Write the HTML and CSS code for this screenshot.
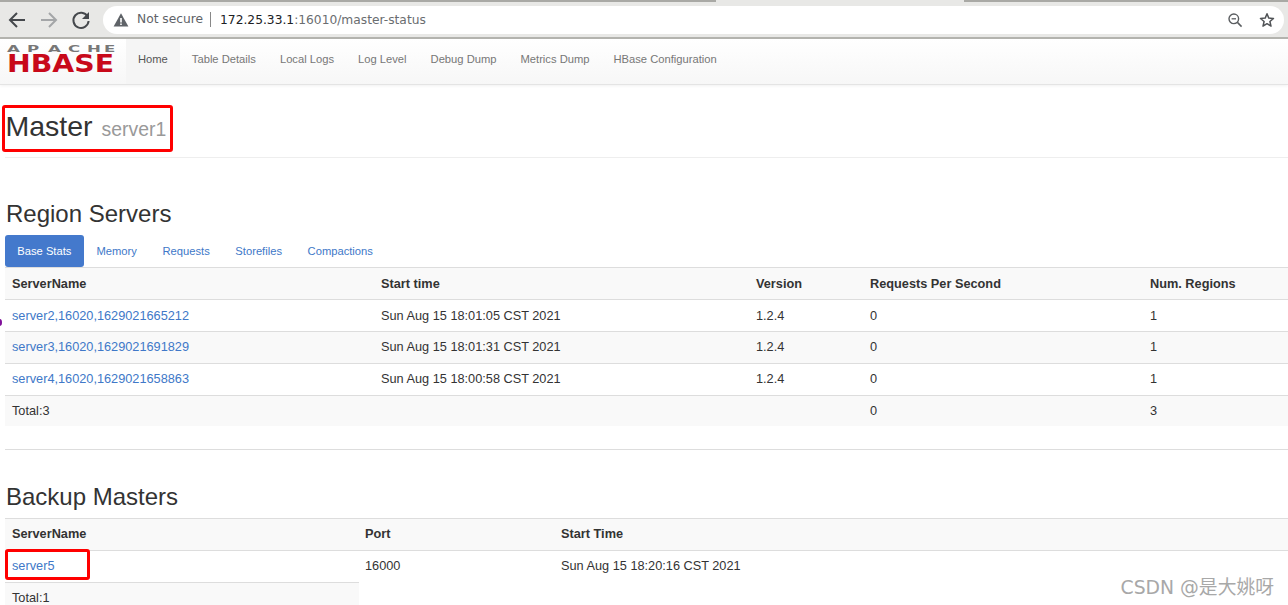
FILE: index.html
```html
<!DOCTYPE html>
<html lang="en">
<head>
<meta charset="utf-8">
<title>Master: server1</title>
<link rel="stylesheet" href="styles.css">
</head>
<body>
<div class="toolbar">
  <svg class="tool-icon" width="24" height="24" viewBox="0 0 24 24"><path d="M20 12H6M12 5l-7 7 7 7" fill="none" stroke="#45484c" stroke-width="2"/></svg>
  <svg class="tool-icon" width="24" height="24" viewBox="0 0 24 24"><path d="M4 12h14M12 5l7 7-7 7" fill="none" stroke="#a4a6a8" stroke-width="2"/></svg>
  <svg class="tool-icon" width="24" height="24" viewBox="0 0 24 24"><path d="M18.6 8.5A7.6 7.6 0 1 0 19.6 13" fill="none" stroke="#45484c" stroke-width="2"/><path d="M20 4v7h-7z" fill="#45484c"/></svg>
  <div class="omnibox">
    <svg class="warn" width="16" height="16" viewBox="0 0 16 16"><path d="M8 1.2 15.4 14.5H.6z" fill="#5f6368"/><path d="M7.2 6h1.6v4.6H7.2zM7.2 11.4h1.6V13H7.2z" fill="#fff"/></svg>
    <span class="not-secure">Not secure</span>
    <span class="url"><b class="host">172.25.33.1</b>:16010/master-status</span>
    <svg class="zoom-icon" width="16" height="16" viewBox="0 0 16 16"><circle cx="6.8" cy="6.8" r="4.8" fill="none" stroke="#5a5d60" stroke-width="1.4"/><path d="M10.4 10.4l4.2 4.2" stroke="#5a5d60" stroke-width="1.5"/><path d="M4.6 6.8h4.4" stroke="#5a5d60" stroke-width="1.3"/></svg>
    <svg class="star-icon" width="16" height="16" viewBox="0 0 16 16"><path d="M8 1.8l1.8 4.3 4.7.4-3.6 3 1.1 4.6L8 11.7l-4 2.4 1.1-4.6-3.6-3 4.7-.4z" fill="none" stroke="#505356" stroke-width="1.5" stroke-linejoin="round"/></svg>
  </div>
</div>

<nav class="navbar">
  <svg class="logo" width="126" height="45" viewBox="0 0 126 45" role="img" aria-label="Apache HBase">
    <text class="logo-apache" transform="scale(1.75 1)" x="4 15.4 27.4 38.9 49.7 59.4" y="13">APACHE</text>
    <text class="logo-hbase" x="7" y="33" textLength="107" lengthAdjust="spacingAndGlyphs">HBASE</text>
  </svg>
  <ul class="nav-links">
    <li class="active"><a href="#">Home</a></li>
    <li><a href="#">Table Details</a></li>
    <li><a href="#">Local Logs</a></li>
    <li><a href="#">Log Level</a></li>
    <li><a href="#">Debug Dump</a></li>
    <li><a href="#">Metrics Dump</a></li>
    <li><a href="#">HBase Configuration</a></li>
  </ul>
</nav>

<main class="content">
  <header class="page-header">
    <h1>Master <small>server1</small></h1>
  </header>

  <section class="region">
    <h2>Region Servers</h2>
    <ul class="tabs">
      <li class="active"><a href="#">Base Stats</a></li>
      <li><a href="#">Memory</a></li>
      <li><a href="#">Requests</a></li>
      <li><a href="#">Storefiles</a></li>
      <li><a href="#">Compactions</a></li>
    </ul>
    <table class="data region-table">
      <thead>
        <tr><th class="c1">ServerName</th><th class="c2">Start time</th><th class="c3">Version</th><th class="c4">Requests Per Second</th><th class="c5">Num. Regions</th></tr>
      </thead>
      <tbody>
        <tr><td><a href="#">server2,16020,1629021665212</a></td><td>Sun Aug 15 18:01:05 CST 2021</td><td>1.2.4</td><td>0</td><td>1</td></tr>
        <tr class="stripe raised"><td><a href="#">server3,16020,1629021691829</a></td><td>Sun Aug 15 18:01:31 CST 2021</td><td>1.2.4</td><td>0</td><td>1</td></tr>
        <tr class="raised"><td><a href="#">server4,16020,1629021658863</a></td><td>Sun Aug 15 18:00:58 CST 2021</td><td>1.2.4</td><td>0</td><td>1</td></tr>
        <tr class="stripe"><td>Total:3</td><td></td><td></td><td>0</td><td>3</td></tr>
      </tbody>
    </table>
  </section>

  <hr class="divider">

  <section class="backup">
    <h2>Backup Masters</h2>
    <table class="data backup-table">
      <thead>
        <tr class="raised"><th class="b1">ServerName</th><th class="b2">Port</th><th class="b3">Start Time</th></tr>
      </thead>
      <tbody>
        <tr class="raised"><td><a href="#">server5</a></td><td>16000</td><td>Sun Aug 15 18:20:16 CST 2021</td></tr>
        <tr class="stripe raised"><td>Total:1</td></tr>
      </tbody>
    </table>
  </section>
</main>

<div class="mark mark-master"></div>
<div class="mark mark-server5"></div>
<div class="dot"></div>
<div class="watermark">CSDN @是大姚呀</div>
</body>
</html>
```
FILE: styles.css
```css
* { box-sizing: border-box; }
html, body { margin: 0; height: 605px; overflow: hidden; background: #fff; }
body { font-family: "Liberation Sans", Arial, sans-serif; font-size: 12.74px; color: #333; position: relative; }
a { text-decoration: none; color: #4078c8; }
ul { list-style: none; margin: 0; padding: 0; }

.toolbar { position: relative; height: 39px; display: flex; align-items: center; background: #e8e8e6; border-top: 2px solid #a9a9a5; border-bottom: 2px solid #b3b3ae; padding: 0 4px 0 5px; }
.toolbar::before { content: ""; position: absolute; left: 716px; top: -2px; width: 248px; height: 2px; background: #e8e8e6; }
.tool-icon { margin-right: 8px; flex: none; }
.tool-icon:nth-child(3) { margin-right: 10px; }
.omnibox { flex: 1; height: 28px; background: #fff; border-radius: 14px; display: flex; align-items: center; padding: 0 9px 0 10px; font-family: "DejaVu Sans", sans-serif; font-size: 12.25px; }
.warn { margin-right: 8px; }
.not-secure { color: #5f6368; padding-right: 7px; border-right: 1px solid #888; line-height: 15px; }
.url { color: #6a6d70; margin-left: 9px; flex: 1; }
.host { font-weight: normal; color: #202124; }
.zoom-icon { margin-right: 16px; }

.navbar { height: 46px; display: flex; background: linear-gradient(#fff, #f7f7f7); border-bottom: 1px solid #e4e4e4; box-shadow: 0 1px 3px rgba(0,0,0,.06); }
.logo { flex: none; width: 126px; height: 45px; }
.logo-apache { font: bold 9.5px "DejaVu Sans", sans-serif; fill: #777; }
.logo-hbase { font: bold 25.5px "DejaVu Sans", sans-serif; fill: #c8091a; }
.nav-links { display: flex; font-size: 11.2px; line-height: 40px; }
.nav-links a { display: block; padding: 0 12px; color: #777; }
.nav-links .active a { color: #555; background: #f5f5f5; height: 45px; }

.content { padding-left: 5px; }
.page-header { height: 73px; border-bottom: 1px solid #eee; padding-top: 23px; }
h1, h2 { margin: 0; font-weight: 400; color: #333; }
h1 { font-size: 28.5px; line-height: 36px; padding-left: 1px; text-indent: -.5px; }
h1 small { font-size: 19.4px; color: #999; margin-left: 1px; }
h2 { font-size: 24px; line-height: 30px; padding-left: 1px; }
.region h2 { margin-top: 41px; }
.tabs { display: flex; margin-top: 6px; font-size: 11.2px; }
.tabs a { display: block; padding: 0 12.8px; line-height: 32px; height: 32px; border-radius: 3px; }
.tabs .active a { background: #4479cc; color: #fff; padding: 0 12.3px; }

.data { border-collapse: collapse; table-layout: fixed; font-size: 12.74px; }
.data th, .data td { padding: 0 7px; height: 32px; text-align: left; border-top: 1px solid #ddd; vertical-align: middle; }
.data th { font-weight: 700; background: #f9f9f9; border-bottom: 1px solid #ddd; height: 32px; }
.stripe td { background: #f9f9f9; }
.raised td, .raised th { padding-bottom: 2px; }
.region-table { width: 1283px; }
.region-table tbody tr:last-child td { height: 30px; }
.c1 { width: 369px; } .c2 { width: 375px; } .c3 { width: 114px; } .c4 { width: 280px; }
.backup-table { width: 1283px; }
.b1 { width: 354px; } .b2 { width: 196px; }
.backup-table th:first-child ~ th, .backup-table td:first-child ~ td { padding-left: 6px; }

.divider { border: 0; border-top: 1px solid #ddd; margin: 23px 0 0; }
.backup h2 { margin-top: 32px; }
.backup .data { margin-top: 6px; }

.mark { position: absolute; border: 3px solid #f00; border-radius: 3px; }
.mark-master { left: 2px; top: 105px; width: 171px; height: 47px; }
.mark-server5 { left: 5px; top: 549px; width: 85px; height: 31px; }
.dot { position: absolute; left: -3px; top: 319px; width: 5px; height: 7px; border-radius: 50%; background: #80119a; }
.watermark { position: absolute; right: 14px; top: 577px; font-family: "DejaVu Sans", "Noto Sans CJK SC", sans-serif; font-size: 18.8px; color: #a8a8a8; line-height: 22px; }
```
